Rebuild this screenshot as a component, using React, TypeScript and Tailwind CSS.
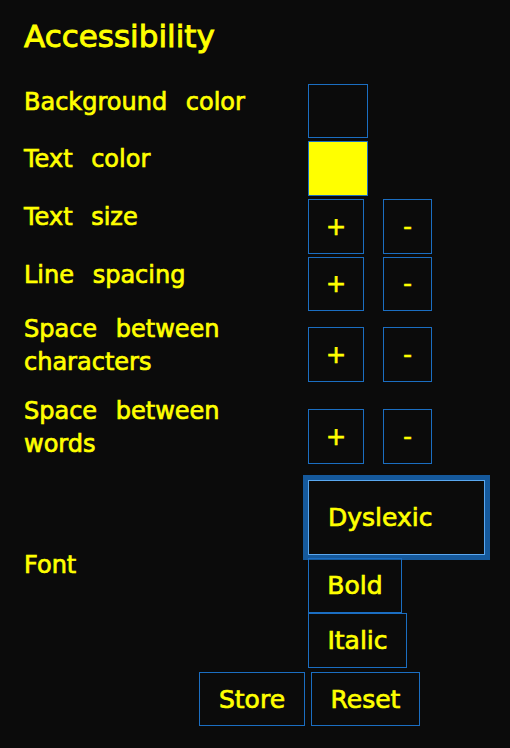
import React from "react";

const labelCls =
  "w-[260px] shrink-0 mr-[24px] mb-[18px] text-[24px] leading-[33px] [word-spacing:11px]";
const boxBorder = "border border-[#1b6ec2]";

function Row({
  label,
  h,
  children,
  extra = "",
}: {
  label: string;
  h: string;
  children: React.ReactNode;
  extra?: string;
}) {
  return (
    <div className={`flex items-center ${h} ${extra}`}>
      <div className={labelCls}>{label}</div>
      {children}
    </div>
  );
}

function PlusMinus({ h = "h-[55px]" }: { h?: string }) {
  return (
    <div className="flex items-center gap-[19px]">
      <button
        className={`${boxBorder} w-[56px] ${h} flex items-center justify-center text-[24px] leading-none text-[#ffff00]`}
      >
        +
      </button>
      <button
        className={`${boxBorder} w-[49px] ${h} flex items-center justify-center text-[24px] leading-none text-[#ffff00]`}
      >
        -
      </button>
    </div>
  );
}

export default function App() {
  return (
    <div className="w-[510px] h-[748px] overflow-hidden bg-[#0b0b0b] text-[#ffff00] font-['DejaVu_Sans',Verdana,sans-serif] [-webkit-text-stroke:0.7px_#ffff00] pt-[18px] pl-[24px]">
      <h1 className="text-[31px] leading-[36px] mb-[30px] [-webkit-text-stroke:0.9px_#ffff00]">
        Accessibility
      </h1>
      <div className="flex flex-col gap-[3px]">
        <Row label="Background color" h="h-[54px]">
          <div className={`${boxBorder} w-[60px] h-[54px] bg-[#0b0b0b]`} />
        </Row>
        <Row label="Text color" h="h-[55px]">
          <div className={`${boxBorder} w-[60px] h-[55px] bg-[#ffff00]`} />
        </Row>
        <Row label="Text size" h="h-[55px]">
          <PlusMinus />
        </Row>
        <Row label="Line spacing" h="h-[54px]">
          <PlusMinus h="h-[54px]" />
        </Row>
        <Row label="Space between characters" h="h-[81px]">
          <PlusMinus />
        </Row>
        <Row label="Space between words" h="h-[77px]">
          <PlusMinus />
        </Row>
        <Row label="Font" h="" extra="pt-[2px] pb-[1px]">
          <div className="flex flex-col items-start">
            <button className="w-[177px] h-[75px] mb-[3px] border border-[#5aa8f0] outline-solid outline-[length:5px] outline-[#15599c] flex items-center justify-start pl-[19px] text-[25px] leading-none text-[#ffff00]">
              Dyslexic
            </button>
            <button
              className={`${boxBorder} w-[94px] h-[55px] flex items-center justify-center text-[25px] leading-none text-[#ffff00]`}
            >
              Bold
            </button>
            <button
              className={`${boxBorder} w-[99px] h-[55px] flex items-center justify-center text-[25px] leading-none text-[#ffff00]`}
            >
              Italic
            </button>
          </div>
        </Row>
        <div className="flex items-center gap-[6px] ml-[175px]">
          <button
            className={`${boxBorder} w-[106px] h-[54px] flex items-center justify-center text-[25px] leading-none text-[#ffff00]`}
          >
            Store
          </button>
          <button
            className={`${boxBorder} w-[109px] h-[54px] flex items-center justify-center text-[25px] leading-none text-[#ffff00]`}
          >
            Reset
          </button>
        </div>
      </div>
    </div>
  );
}
